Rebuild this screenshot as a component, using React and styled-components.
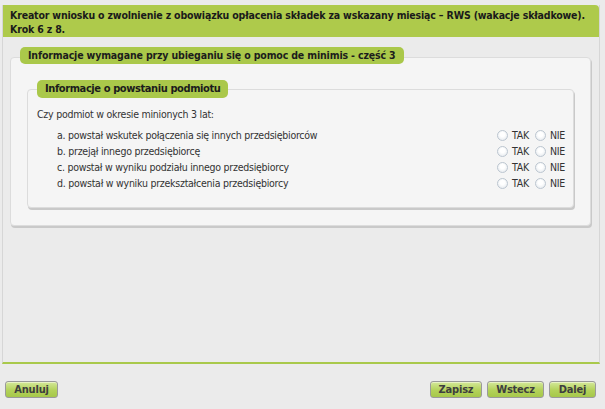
import styled, { createGlobalStyle } from 'styled-components';

const GlobalStyle = createGlobalStyle`
  body {
    margin: 0;
    background: #ebebeb;
    font-family: 'DejaVu Sans Condensed', 'DejaVu Sans', sans-serif;
    font-size: 10.5px;
    letter-spacing: -0.25px;
    color: #333;
  }
`;

const Wizard = styled.div`
  margin: 5px 5px 0 2px;
  height: 357px;
  border-left: 1px solid #d6d6d6;
  border-right: 1px solid #d6d6d6;
  border-bottom: 2px solid #a9c94b;
  display: flex;
  flex-direction: column;
`;

const Header = styled.div`
  background: #aeca4b;
  border-top-right-radius: 4px;
  padding: 3px 7px;
  height: 26px;
  font-weight: 700;
  letter-spacing: -0.17px;
  line-height: 14px;
  color: #1a1a1a;
  white-space: nowrap;
`;

const Body = styled.div`
  padding: 20px 8px 0 7px;
`;

const Panel = styled.div`
  background: #f5f5f5;
  border: 1px solid #dcdcdc;
  border-radius: 4px;
  box-shadow: 1px 2px 0 #c9c9c9;
  padding: ${(p) => p.$pad};
  margin-top: ${(p) => p.$top || 0}px;
`;

const Legend = styled.div`
  width: fit-content;
  margin: ${(p) => p.$margin};
  background: #aac84a;
  border-radius: 5px;
  padding: 0 8px;
  height: ${(p) => p.$h}px;
  line-height: ${(p) => p.$h}px;
  font-weight: 700;
  font-size: ${(p) => p.$size}px;
  letter-spacing: ${(p) => p.$ls}px;
  color: #1c1c1c;
`;

const Question = styled.div`
  margin: 8px 0 5px 9px;
  line-height: 16px;
`;

const Row = styled.div`
  display: flex;
  align-items: center;
  height: 16px;
  padding-left: 29px;
`;

const RowText = styled.span`
  flex: 1;
`;

const Choices = styled.div`
  display: flex;
  align-items: center;
  gap: 4px;
`;

const Radio = styled.span`
  width: 9px;
  height: 9px;
  border-radius: 50%;
  border: 1px solid #bcc6d0;
  background: radial-gradient(circle at 50% 40%, #fff 30%, #e0e5ea 100%);
  margin-left: ${(p) => p.$gap}px;
`;

const Footer = styled.div`
  display: flex;
  justify-content: space-between;
  margin: 17px 9px 0 5px;
`;

const ButtonGroup = styled.div`
  display: flex;
  gap: 5px;
`;

const Button = styled.button`
  width: ${(p) => p.$w}px;
  height: 17px;
  padding: 0;
  border: 1px solid #9a9a9a;
  border-radius: 3px;
  background: linear-gradient(#d4e89a, #b3d25a 55%, #a6c84a);
  box-shadow: inset 0 1px 0 #e8f3c4;
  font-family: inherit;
  font-size: 11px;
  letter-spacing: -0.2px;
  font-weight: 700;
  color: #3e3e3e;
`;

const items = [
  'a. powstał wskutek połączenia się innych przedsiębiorców',
  'b. przejął innego przedsiębiorcę',
  'c. powstał w wyniku podziału innego przedsiębiorcy',
  'd. powstał w wyniku przekształcenia przedsiębiorcy',
];

const App = () => {
  return (
    <>
      <GlobalStyle />
      <Wizard>
        <Header>
          Kreator wniosku o zwolnienie z obowiązku opłacenia składek za wskazany
          miesiąc – RWS (wakacje składkowe).
          <br />
          Krok 6 z 8.
        </Header>
        <Body>
          <Panel $pad="0 16px 17px 16px">
            <Legend $margin="-11px 0 0 -7px" $h={17} $size={10.5} $ls={-0.15}>
              Informacje wymagane przy ubieganiu się o pomoc de minimis - część 3
            </Legend>
            <Panel $pad="0 8px 16px 0" $top={25}>
              <Legend $margin="-10px 0 0 9px" $h={18} $size={11} $ls={-0.4}>
                Informacje o powstaniu podmiotu
              </Legend>
              <Question>Czy podmiot w okresie minionych 3 lat:</Question>
              {items.map((t) => (
                <Row key={t}>
                  <RowText>{t}</RowText>
                  <Choices>
                    <Radio $gap={0} />
                    <span>TAK</span>
                    <Radio $gap={2} />
                    <span>NIE</span>
                  </Choices>
                </Row>
              ))}
            </Panel>
          </Panel>
        </Body>
      </Wizard>
      <Footer>
        <Button $w={53}>Anuluj</Button>
        <ButtonGroup>
          <Button $w={52}>Zapisz</Button>
          <Button $w={57}>Wstecz</Button>
          <Button $w={47}>Dalej</Button>
        </ButtonGroup>
      </Footer>
    </>
  );
};

export default App;
